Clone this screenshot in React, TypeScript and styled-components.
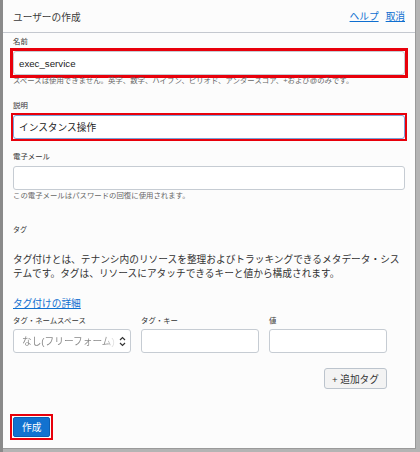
import React from "react";
import styled, { createGlobalStyle } from "styled-components";

const Global = createGlobalStyle`
  html, body { margin: 0; padding: 0; }
  body {
    background: #b4b4b4;
    font-family: "Liberation Sans", "Noto Sans CJK JP", sans-serif;
  }
  * { box-sizing: border-box; }
`;

const Page = styled.div`
  width: 420px;
  height: 452px;
  background: #b4b4b4;
  border-left: 3px solid #8a8a8a;
  overflow: hidden;
`;

const Panel = styled.div`
  width: 413px;
  height: 449px;
  background: #fcfcfc;
  border-right: 1px solid #9a9a9a;
  border-bottom: 1px solid #9a9a9a;
  display: flex;
  flex-direction: column;
`;

const Header = styled.div`
  height: 33px;
  padding: 2px 10px 0 10px;
  border-bottom: 1px solid #c4c8cf;
  display: flex;
  align-items: center;
  justify-content: space-between;
`;

const Title = styled.div`
  font-size: 9.7px;
  color: #3a3a3a;
`;

const HeaderLinks = styled.div`
  display: flex;
  gap: 7px;
`;

const Link = styled.a`
  font-size: 9.7px;
  line-height: 12px;
  color: #0f6fd0;
  text-decoration: underline;
  cursor: pointer;
`;

const Body = styled.div`
  padding: 4px 10px 0 10px;
  display: flex;
  flex-direction: column;
`;

const Field = styled.div<{ $mt: number }>`
  display: flex;
  flex-direction: column;
  margin-top: ${(p) => p.$mt}px;
`;

const Label = styled.div`
  font-size: 7.4px;
  line-height: 10px;
  color: #333;
  margin-bottom: 4px;
`;

/* square red annotation frame drawn around a highlighted control */
const Mark = styled.div<{ $width: number; $offset: number }>`
  display: flex;
  outline: ${(p) => p.$width}px solid #e8000b;
  outline-offset: ${(p) => p.$offset}px;
`;

const Input = styled.div<{ $focused?: boolean }>`
  height: 24px;
  width: 100%;
  background: #fff;
  border: 1px solid ${(p) => (p.$focused ? "#7aa3d9" : "#c6ccd3")};
  border-radius: 3px;
  padding: 0 5px;
  display: flex;
  align-items: center;
  font-size: 9.7px;
  color: #222;
`;

const Help = styled.div`
  font-size: 7.4px;
  line-height: 10px;
  color: #666;
  margin-top: 1px;
`;

const SectionLabel = styled.div`
  font-size: 7px;
  line-height: 10px;
  color: #333;
  margin-top: 24px;
`;

const Paragraph = styled.p`
  margin: 18px 0 0 0;
  font-size: 9.7px;
  line-height: 14px;
  color: #333;
`;

const DetailLink = styled(Link)`
  margin-top: 17px;
  align-self: flex-start;
`;

const TagGrid = styled.div`
  display: grid;
  grid-template-columns: repeat(3, 118px);
  column-gap: 10px;
  margin-top: 6px;
`;

const ColLabel = styled.div`
  font-size: 7.4px;
  line-height: 10px;
  color: #333;
  margin-bottom: 3px;
`;

const SelectBox = styled.div`
  height: 24px;
  background: #fff;
  border: 1px solid #c6ccd3;
  border-radius: 3px;
  padding: 0 4px 0 8px;
  display: flex;
  align-items: center;
  gap: 2px;
  font-size: 9.7px;
  color: #8a8a8a;
`;

const SelectText = styled.span`
  flex: 1;
  white-space: nowrap;
  overflow: hidden;
  -webkit-mask-image: linear-gradient(to right, #000 86%, rgba(0, 0, 0, 0.25) 96%);
  mask-image: linear-gradient(to right, #000 86%, rgba(0, 0, 0, 0.25) 96%);
`;

const TagInput = styled.div`
  height: 24px;
  background: #fff;
  border: 1px solid #c6ccd3;
  border-radius: 3px;
`;

const AddRow = styled.div`
  width: 374px;
  display: flex;
  justify-content: flex-end;
  margin-top: 15px;
`;

const SecondaryButton = styled.button`
  height: 21px;
  padding: 0 7px;
  background: #f3f3f3;
  border: 1px solid #bcc4cd;
  border-radius: 3px;
  font-family: inherit;
  font-size: 9.7px;
  color: #333;
`;

const Footer = styled.div`
  margin-top: 28px;
  display: flex;
`;

const PrimaryButton = styled.button`
  height: 20px;
  padding: 0 8px;
  background: #1272d0;
  border: 1px solid #0c5fb3;
  border-radius: 2px;
  font-family: inherit;
  font-size: 9.7px;
  color: #fff;
`;

const UpDown = () => (
  <svg width="7" height="11" viewBox="0 0 7 11" fill="none" stroke="#333" strokeWidth="1.2">
    <path d="M1 4 L3.5 1.5 L6 4" />
    <path d="M1 7 L3.5 9.5 L6 7" />
  </svg>
);

export default function App() {
  return (
    <>
      <Global />
      <Page>
        <Panel>
          <Header>
            <Title>ユーザーの作成</Title>
            <HeaderLinks>
              <Link>ヘルプ</Link>
              <Link>取消</Link>
            </HeaderLinks>
          </Header>
          <Body>
            <Field $mt={0}>
              <Label>名前</Label>
              <Mark $width={3} $offset={0}>
                <Input>exec_service</Input>
              </Mark>
              <Help>
                スペースは使用できません。英字、数字、ハイフン、ピリオド、アンダースコア、+および@のみです。
              </Help>
            </Field>
            <Field $mt={15}>
              <Label>説明</Label>
              <Mark $width={2} $offset={0}>
                <Input $focused>インスタンス操作</Input>
              </Mark>
            </Field>
            <Field $mt={13}>
              <Label>電子メール</Label>
              <Input />
              <Help>この電子メールはパスワードの回復に使用されます。</Help>
            </Field>
            <SectionLabel>タグ</SectionLabel>
            <Paragraph>
              タグ付けとは、テナンシ内のリソースを整理およびトラッキングできるメタデータ・システムです。タグは、リソースにアタッチできるキーと値から構成されます。
            </Paragraph>
            <DetailLink>タグ付けの詳細</DetailLink>
            <TagGrid>
              <ColLabel>タグ・ネームスペース</ColLabel>
              <ColLabel>タグ・キー</ColLabel>
              <ColLabel>値</ColLabel>
              <SelectBox>
                <SelectText>なし(フリーフォーム)</SelectText>
                <UpDown />
              </SelectBox>
              <TagInput />
              <TagInput />
            </TagGrid>
            <AddRow>
              <SecondaryButton>+ 追加タグ</SecondaryButton>
            </AddRow>
            <Footer>
              <Mark $width={2} $offset={1}>
                <PrimaryButton>作成</PrimaryButton>
              </Mark>
            </Footer>
          </Body>
        </Panel>
      </Page>
    </>
  );
}
